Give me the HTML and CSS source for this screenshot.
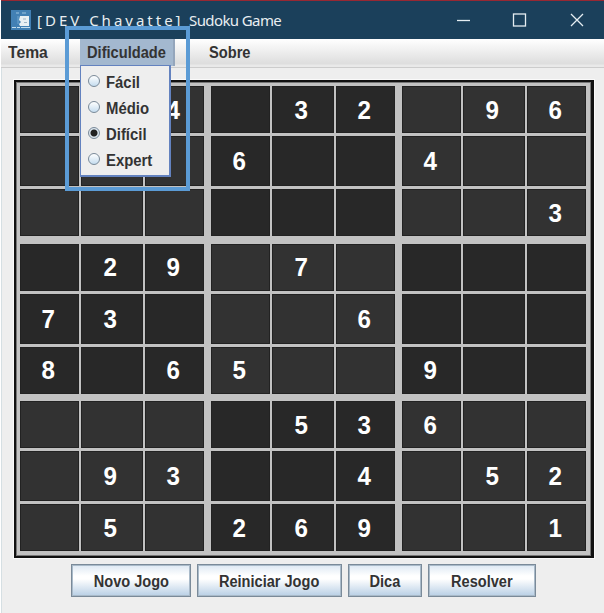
FILE: index.html
```html
<!DOCTYPE html>
<html lang="pt">
<head>
<meta charset="utf-8">
<title>[DEV Chavatte] Sudoku Game</title>
<link rel="stylesheet" href="styles.css">
</head>
<body>
<div class="window">
  <header class="titlebar">
    <svg class="logo" width="20" height="20" viewBox="0 0 20 20"><rect width="20" height="20" fill="#4280b4"/><path d="M5 3h3M11 3h4" stroke="#9cc4e0"/><path d="M7 6v8" stroke="#6fa5cf"/><path d="M9 6h9v10H9l-1-2 2-2-2-2z" fill="#e8eff3"/><path d="M12 9h3M13 12.500h3" stroke="#9db4c4"/><path d="M1 17.500h4m1 0h3m1 0h9" stroke="#c5deed"/></svg>
    <h1 class="title"><span class="brand" id="brand">[DEV Chavatte]</span><span class="name">Sudoku Game</span></h1>
    <svg class="controls" width="130" height="16" viewBox="0 0 130 16" fill="none" stroke="#e5edf2" stroke-width="1.300"><path d="M1 8.500h13"/><rect x="57.500" y="2" width="12" height="12"/><path d="M115 2l12 12m0-12l-12 12"/></svg>
  </header>
  <nav class="menubar">
    <span class="item tema"><span class="label">Tema</span></span>
    <span class="item active"><span class="label">Dificuldade</span>
      <span class="menu">
        <span class="option"><i class="radio"></i><span class="label">Fácil</span></span>
        <span class="option"><i class="radio"></i><span class="label">Médio</span></span>
        <span class="option"><i class="radio on"></i><span class="label">Difícil</span></span>
        <span class="option"><i class="radio"></i><span class="label">Expert</span></span>
      </span>
      <span class="highlight"></span>
    </span>
    <span class="item sobre"><span class="label">Sobre</span></span>
  </nav>
  <main class="board" id="board"></main>
  <footer class="actions">
    <button class="btn novo"><span class="caption">Novo Jogo</span></button>
    <button class="btn reiniciar"><span class="caption">Reiniciar Jogo</span></button>
    <button class="btn dica"><span class="caption">Dica</span></button>
    <button class="btn resolver"><span class="caption">Resolver</span></button>
  </footer>
</div>
<script src="board.js"></script>
</body>
</html>
```
FILE: board.js
```js
const rows = [
  '..4.32.96',
  '...6..4..',
  '........3',
  '.29.7....',
  '73...6...',
  '8.65..9..',
  '....536..',
  '.93..4.52',
  '.5.269..1'
];
const board = document.getElementById('board');
for (let b = 0; b < 9; b++) {
  const block = document.createElement('div');
  block.className = 'block';
  for (let c = 0; c < 9; c++) {
    const y = Math.floor(b / 3) * 3 + Math.floor(c / 3);
    const x = (b % 3) * 3 + c % 3;
    const cell = document.createElement('div');
    cell.className = 'cell';
    const value = document.createElement('span');
    value.className = 'digit';
    value.textContent = rows[y][x] === '.' ? '' : rows[y][x];
    cell.append(value);
    block.append(cell);
  }
  board.append(block);
}
```
FILE: styles.css
```css
* { box-sizing: border-box; }
body {
  margin: 0;
  background: #eee;
  font-family: "Liberation Sans", Arial, sans-serif;
  color: #333;
}
.window { width: 604px; height: 613px; overflow: hidden; border-left: 1px solid #fff; box-shadow: inset 1px 0 #d5dfe3; }
.titlebar {
  height: 39px;
  display: flex;
  align-items: center;
  padding-left: 10px;
  border-top: 1px solid #982833;
  background: #1b405b;
  color: #e9eef1;
}
.logo { flex: none; }
.title {
  display: flex;
  margin: 0 0 0 6px;
  width: 416px;
  font: 400 15px/20px "Noto Sans", sans-serif;
  white-space: pre;
}
.brand { width: 152px; letter-spacing: 3px; }
.name { letter-spacing: -.6px; }
.controls { flex: none; margin-left: 3px; }
.menubar {
  display: flex;
  height: 29px;
  padding-left: 7px;
  border-bottom: 1px solid #ccc;
  background: linear-gradient(#fff, #ddd 25px, #e9e9e9 26px);
  font-size: 16px;
  font-weight: bold;
  line-height: 28px;
}
.tema { width: 72px; }
.item { white-space: nowrap; }
.active { position: relative; width: 95px; height: 27px; padding-left: 7px; background: #a3b8cf; border-right: 2px solid #94a6bc; }
.label { display: inline-block; transform: scaleX(.915); transform-origin: left center; }
.tema .label { transform: scaleX(.98); }
.option .label { transform: scaleX(.93); }
.caption { display: inline-block; transform: scaleX(.91); }
.sobre { margin-left: 34px; }
.menu {
  position: absolute;
  z-index: 2;
  top: 26px;
  left: 0;
  width: 91px;
  height: 112px;
  padding: 3px 0 0 8px;
  border: 2px solid #6382bf;
  border-width: 1px 2px 2px 1px;
  background: #eee;
}
.option { display: flex; height: 26px; line-height: 27px; }
.radio { width: 12px; height: 12px; margin: 6px 6px 0 -1px; border: 1px solid #7a8a99; border-radius: 50%; background: linear-gradient(#fff, #c5dcef); }
.on { background: radial-gradient(circle, #222 3px, #dce7f0 4px); }
.highlight { position: absolute; z-index: 3; left: -15px; top: -13px; width: 125px; height: 165px; border: 4px solid #5b9bd5; }
.board {
  display: grid;
  grid-template-columns: repeat(3, 184px);
  grid-template-rows: repeat(3, 150px);
  column-gap: 7px;
  row-gap: 7.5px;
  width: 580px;
  height: 478px;
  margin: 12px 0 0 13px;
  padding: 4px;
  border: 2px solid #111;
  border-right-width: 3px;
  background: #c2c2c2;
  box-shadow: inset 0 0 0 1px #777, 0 0 0 1px #fafafa;
}
.block {
  display: grid;
  grid-template-columns: 59px 62px 59px;
  grid-template-rows: 47px 50px 47px;
  column-gap: 2px;
  row-gap: 3px;
  --cell: #323232;
}
.block:nth-child(even) { --cell: #282828; }
.cell {
  display: grid;
  place-items: center;
  padding-right: 3px;
  background: var(--cell);
  box-shadow: inset 0 0 0 1px #222;
  color: #fff;
  font-size: 26px;
  font-weight: bold;
  line-height: 30px;
}
.digit { transform: scaleX(.93); }
.actions { display: flex; gap: 6px; padding: 6px 0 0 70px; }
.btn {
  height: 33px;
  padding: 2px 0 0;
  border: 1px solid #7a8a99;
  box-shadow: inset 0 0 0 1px #a9bac9;
  background: linear-gradient(#dde8f3, #fff 35%, #fff 45%, #b8cfe5);
  color: #333;
  font: bold 16px/29px "Liberation Sans", Arial, sans-serif;
  white-space: nowrap;
}
.novo { width: 120px; }
.reiniciar { width: 145px; }
.dica { width: 74px; }
.resolver { width: 108px; }
```
